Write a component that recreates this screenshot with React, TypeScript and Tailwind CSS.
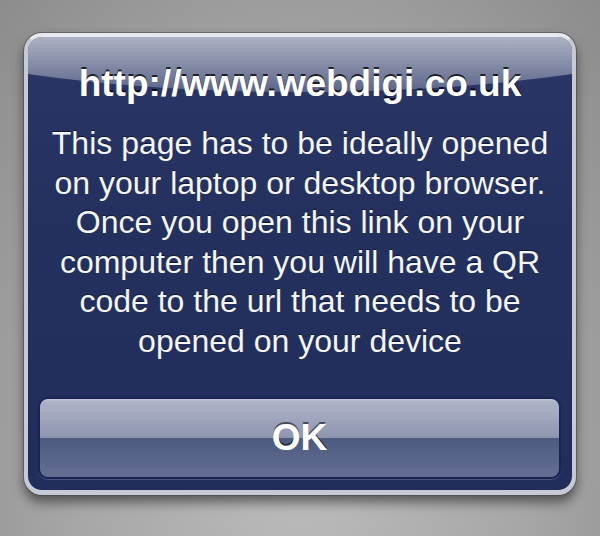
import React from "react";

const lines = [
  "This page has to be ideally opened",
  "on your laptop or desktop browser.",
  "Once you open this link on your",
  "computer then you will have a QR",
  "code to the url that needs to be",
  "opened on your device",
];

export default function App() {
  return (
    <div
      className="w-[600px] h-[536px] overflow-hidden pt-[33px] pl-[24px] bg-[radial-gradient(ellipse_at_50%_85%,#bcbcbc_0%,#a6a6a6_55%,#8c8c8c_100%)]"
      style={{ fontFamily: '"Liberation Sans", Arial, Helvetica, sans-serif' }}
    >
      {/* Alert */}
      <div className="w-[552px] h-[462px] rounded-[18px] border-[4px] border-[#c6cad4] border-t-[#e7e9ef] border-b-[5px] bg-[#c6cad4] shadow-[0_0_0_1px_rgba(70,70,70,0.55),0_7px_12px_rgba(0,0,0,0.5)]">
        <div className="relative w-full h-full overflow-hidden rounded-[14px] bg-[linear-gradient(to_bottom,#2a3767_0%,#24315f_40%,#212d5b_100%)] flex flex-col">
          {/* gloss */}
          <div className="pointer-events-none absolute left-[-228px] top-[-169px] w-[1000px] h-[224px] rounded-[50%] bg-[linear-gradient(to_bottom,rgba(255,255,255,0.62)_75%,rgba(255,255,255,0.24)_100%)]" />

          <div className="relative pt-[25px] text-center text-white">
            <h1 className="text-[37px] leading-[44px] font-bold [text-shadow:0_-2px_0_rgba(0,0,0,0.75)]">
              http://www.webdigi.co.uk
            </h1>
            <p className="mt-[18px] text-[32px] leading-[39.5px] text-[#f5f6f9] [text-shadow:0_-1px_0_rgba(0,0,0,0.55)]">
              {lines.map((l, i) => (
                <React.Fragment key={i}>
                  {l}
                  {i < lines.length - 1 && <br />}
                </React.Fragment>
              ))}
            </p>
          </div>

          {/* Button */}
          <div className="relative mt-[36px] ml-[10px] mr-[11px] h-[82px] rounded-[10px] shadow-[0_1px_0_rgba(120,135,180,0.45)]">
            <button className="w-full h-full rounded-[10px] border-[2px] border-[#1a2451] overflow-hidden flex flex-col">
              <div className="relative w-full h-1/2 bg-[linear-gradient(to_bottom,#c3c7d6_0px,#aeb3c8_3px,#8e95af_100%)]" />
              <div className="w-full h-1/2 bg-[linear-gradient(to_bottom,#4c5a80_0%,#5a6689_55%,#646f93_100%)]" />
            </button>
            <span className="pointer-events-none absolute inset-0 flex items-center justify-center text-[37px] font-bold text-white [text-shadow:0_-2px_0_rgba(0,0,0,0.55)]">
              OK
            </span>
          </div>
        </div>
      </div>
    </div>
  );
}
